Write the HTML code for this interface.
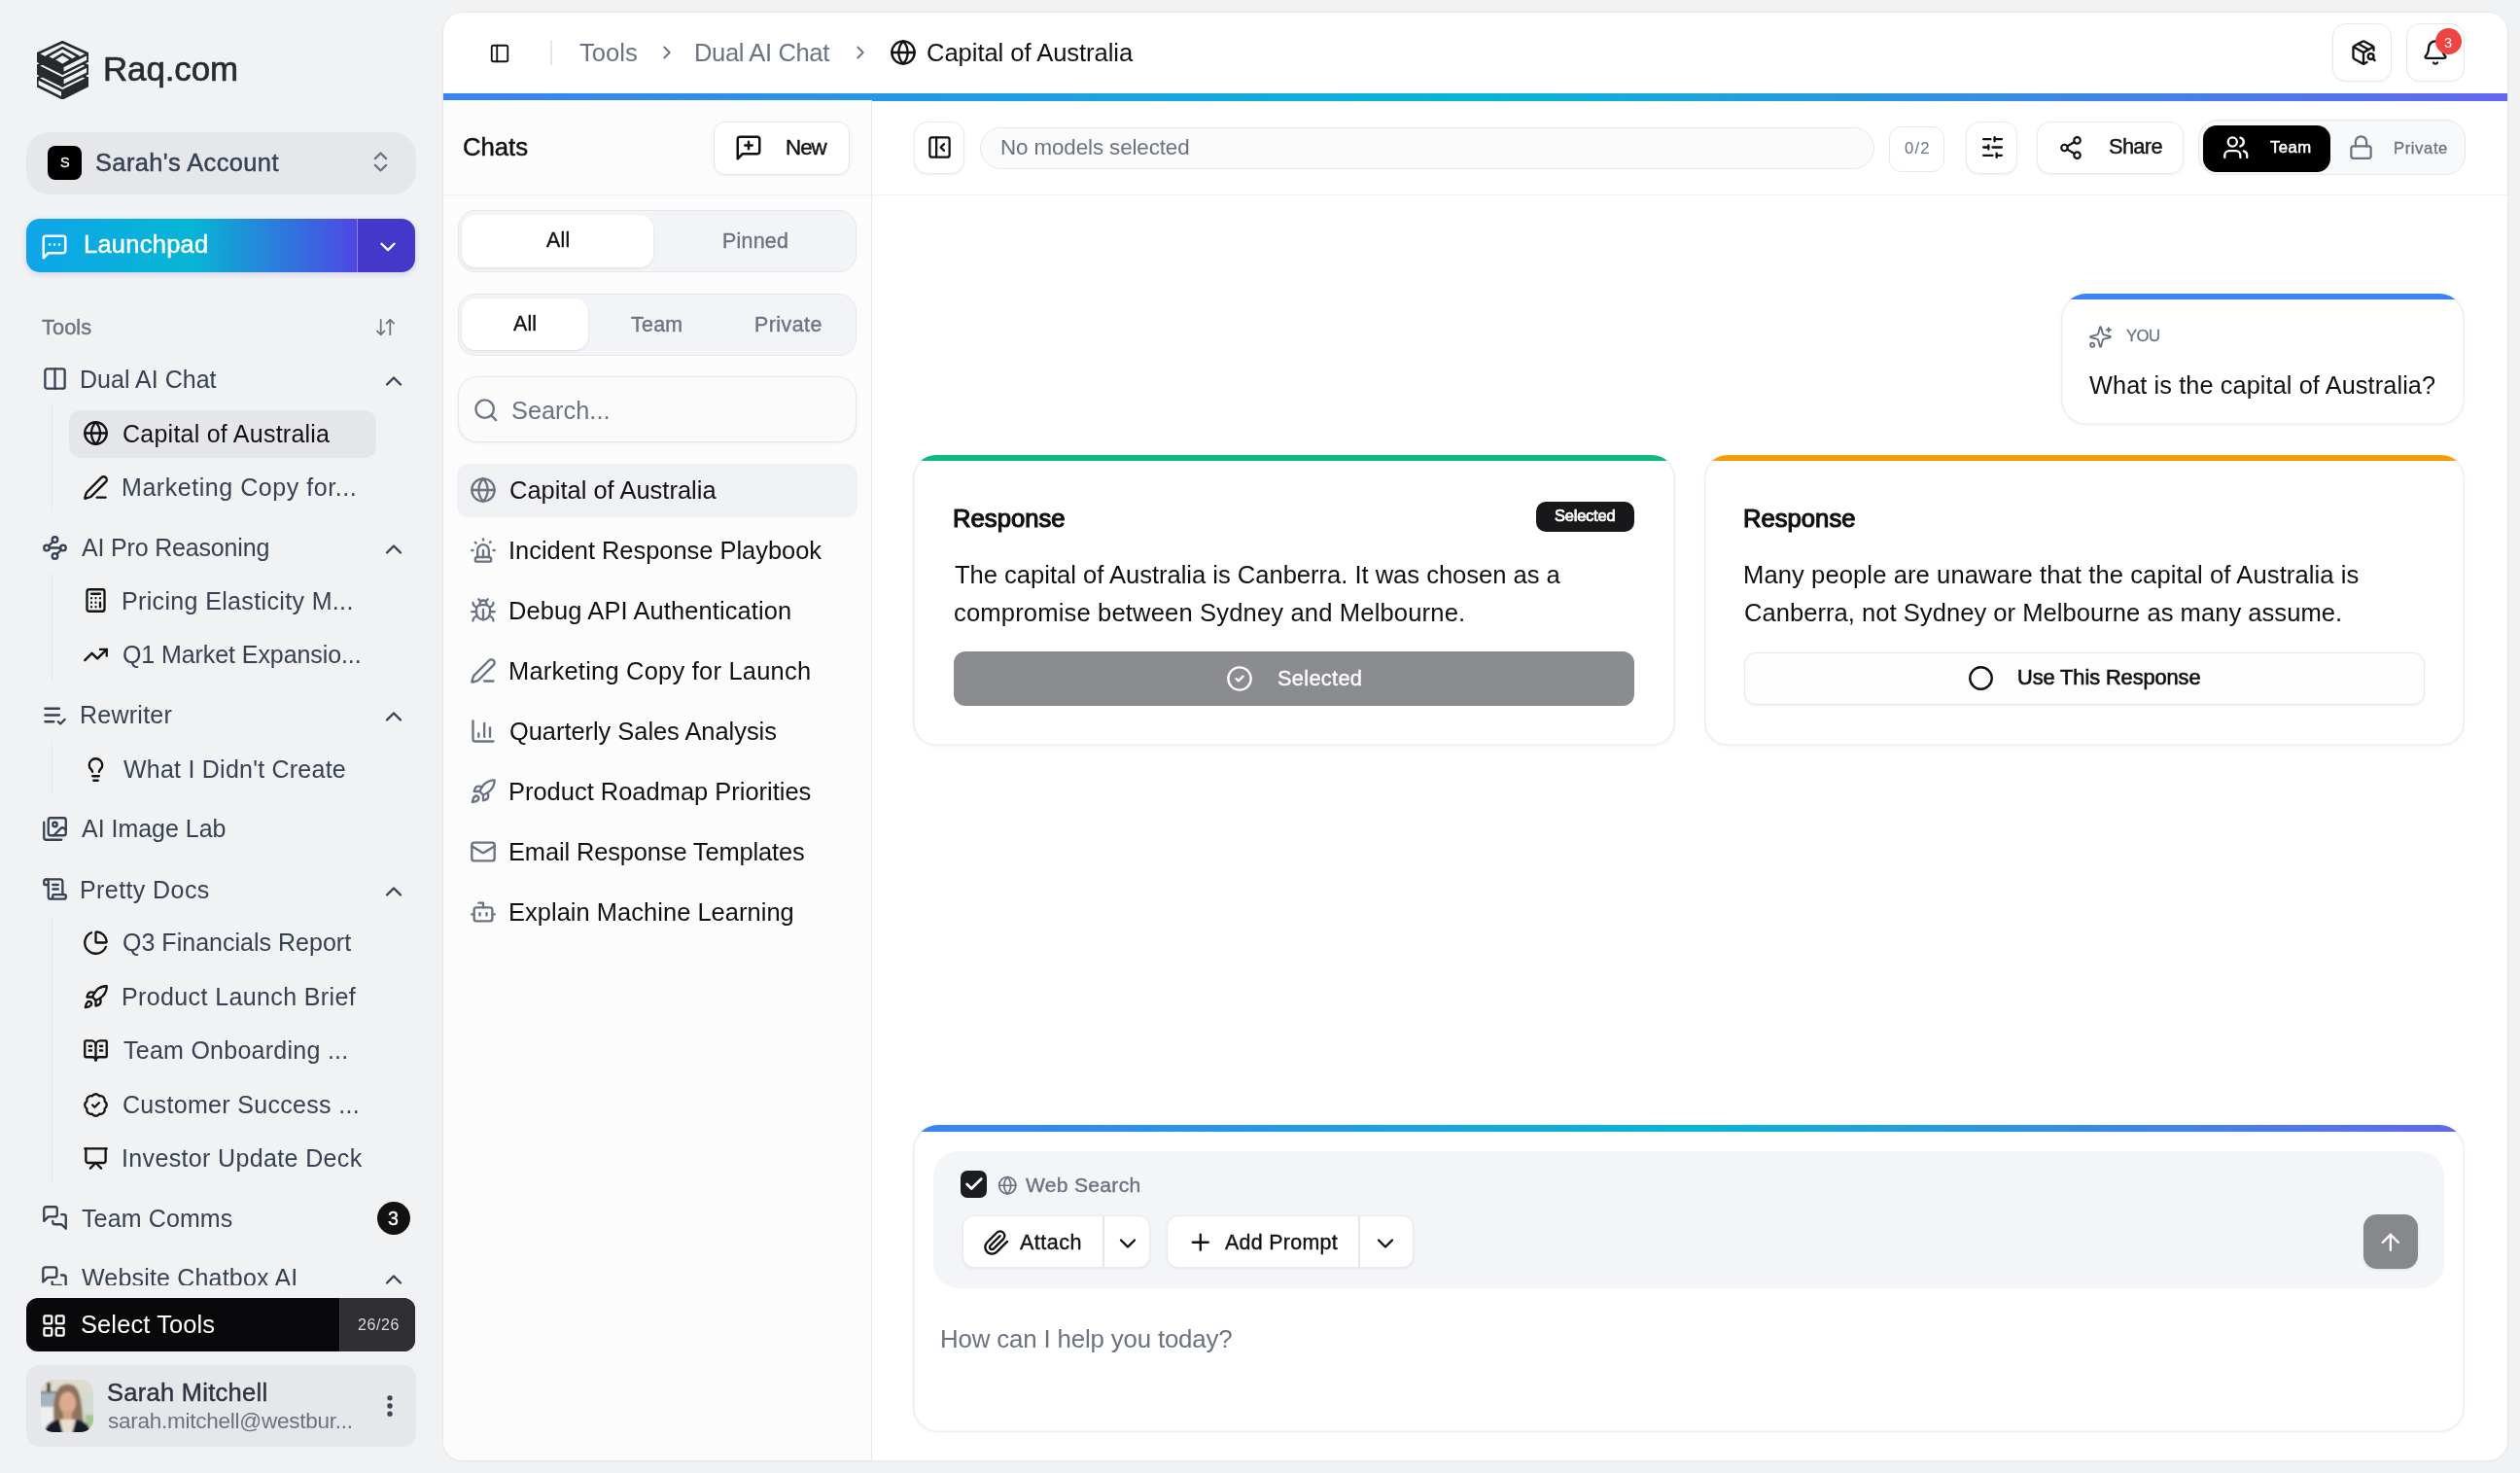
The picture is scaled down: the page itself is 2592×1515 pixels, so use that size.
<!DOCTYPE html><html><head><meta charset="utf-8"><style>html,body{margin:0;padding:0;width:2592px;height:1515px;overflow:hidden;background:#f1f2f4;font-family:"Liberation Sans", sans-serif;}</style></head><body><div style="position:relative;width:2592px;height:1515px;overflow:hidden"><svg style="position:absolute;left:38px;top:42px" width="53" height="60" viewBox="0 0 53 60" fill="none" stroke="#262b2f" stroke-width="2.6" stroke-linejoin="round">
<g>
<path d="M26.3 25.6 L52.4 38.6 L26.3 51.6 L0.3 38.6 Z" fill="#f1f2f4"/>
<path d="M0.3 38.6 L26.3 51.6 L26.3 59.2 L0.3 46.2 Z" fill="#f1f2f4"/>
<path d="M52.4 38.6 L26.3 51.6 L26.3 59.2 L52.4 46.2 Z" fill="#262b2f"/>
</g>
<g>
<path d="M26.3 12.8 L52.4 25.8 L26.3 38.8 L0.3 25.8 Z" fill="#f1f2f4"/>
<path d="M0.3 25.8 L26.3 38.8 L26.3 46.4 L0.3 33.4 Z" fill="#262b2f"/>
<path d="M52.4 25.8 L26.3 38.8 L26.3 46.4 L52.4 33.4 Z" fill="#f1f2f4"/>
</g>
<g>
<path d="M26.3 1.3 L52.4 13.3 L26.3 26.3 L0.3 13.3 Z" fill="#f1f2f4"/>
<path d="M26.3 7.2 L42.6 16.2 L26.3 25.6 L10.0 16.2 Z"/><path d="M26.3 13.6 L35.8 19.3 L26.3 25.2 L16.8 19.3 Z"/>
<path d="M0.3 13.3 L26.3 26.3 L26.3 33.6 L0.3 20.6 Z" fill="#262b2f"/>
<path d="M52.4 13.3 L26.3 26.3 L26.3 33.6 L52.4 20.6 Z" fill="#f1f2f4"/>
</g>
</svg>
<div style="position:absolute;left:106.00px;top:53.97px;font-size:34.88px;line-height:34.88px;font-weight:400;color:#262b2f;letter-spacing:-0.083px;white-space:nowrap;will-change:transform;-webkit-text-stroke:0.63px #262b2f;">Raq.com</div>
<div style="position:absolute;left:27px;top:136px;width:401px;height:64px;background:#e6e7eb;border-radius:24px;"></div>
<div style="position:absolute;left:49px;top:150px;width:35px;height:35px;background:#000;border-radius:8px;"></div>
<div style="position:absolute;left:62.20px;top:159.90px;font-size:14.53px;line-height:14.53px;font-weight:400;color:#fff;letter-spacing:0.000px;white-space:nowrap;will-change:transform;-webkit-text-stroke:0.26px #fff;">S</div>
<div style="position:absolute;left:97.70px;top:155.27px;font-size:25.44px;line-height:25.44px;font-weight:400;color:#374151;letter-spacing:0.388px;white-space:nowrap;will-change:transform;-webkit-text-stroke:0.46px #374151;">Sarah's Account</div>
<svg style="position:absolute;left:378.20px;top:153.10px;" width="27" height="27" viewBox="0 0 24 24" fill="none" stroke="#6b7280" stroke-width="2" stroke-linecap="round" stroke-linejoin="round"><path d="m7 15 5 5 5-5"/><path d="m7 9 5-5 5 5"/></svg>
<div style="position:absolute;left:27px;top:225px;width:400px;height:55px;border-radius:14px;overflow:hidden;box-shadow:0 2px 6px rgba(79,70,229,0.18);"><div style="position:absolute;left:0;top:0;width:341px;height:55px;background:linear-gradient(90deg,#0ea5e9 0%,#06b6d4 50%,#4f46e5 100%);"></div><div style="position:absolute;left:341px;top:0;width:59px;height:55px;background:#4338ca;"></div><div style="position:absolute;left:340px;top:0;width:1px;height:55px;background:rgba(255,255,255,0.35);"></div></div>
<svg style="position:absolute;left:40.60px;top:239.10px;" width="30" height="30" viewBox="0 0 24 24" fill="none" stroke="#fff" stroke-width="2" stroke-linecap="round" stroke-linejoin="round"><path d="M21 15a2 2 0 0 1-2 2H7l-4 4V5a2 2 0 0 1 2-2h14a2 2 0 0 1 2 2z"/><path d="M8 10h.01"/><path d="M12 10h.01"/><path d="M16 10h.01"/></svg>
<div style="position:absolute;left:85.50px;top:239.27px;font-size:25.44px;line-height:25.44px;font-weight:400;color:#fff;letter-spacing:0.281px;white-space:nowrap;will-change:transform;-webkit-text-stroke:0.46px #fff;">Launchpad</div>
<svg style="position:absolute;left:385.80px;top:240.60px;" width="26" height="26" viewBox="0 0 24 24" fill="none" stroke="#fff" stroke-width="2.2" stroke-linecap="round" stroke-linejoin="round"><path d="m6 9 6 6 6-6"/></svg>
<div style="position:absolute;left:42.80px;top:325.55px;font-size:21.8px;line-height:21.8px;font-weight:400;color:#6b7280;letter-spacing:0.054px;white-space:nowrap;will-change:transform;-webkit-text-stroke:0.39px #6b7280;">Tools</div>
<svg style="position:absolute;left:385.20px;top:324.70px;" width="23" height="23" viewBox="0 0 24 24" fill="none" stroke="#6b7280" stroke-width="1.8" stroke-linecap="round" stroke-linejoin="round"><path d="m3 16 4 4 4-4"/><path d="M7 20V4"/><path d="m21 8-4-4-4 4"/><path d="M17 4v16"/></svg>
<svg style="position:absolute;left:42.90px;top:376.20px;" width="27" height="27" viewBox="0 0 24 24" fill="none" stroke="#374151" stroke-width="2.05" stroke-linecap="round" stroke-linejoin="round"><rect width="18" height="18" x="3" y="3" rx="2"/><path d="M12 3v18"/></svg>
<div style="position:absolute;left:82.30px;top:377.54px;font-size:25.0px;line-height:25.0px;font-weight:400;color:#374151;letter-spacing:0.019px;white-space:nowrap;will-change:transform;">Dual AI Chat</div>
<svg style="position:absolute;left:391.00px;top:377.50px;" width="28" height="28" viewBox="0 0 24 24" fill="none" stroke="#374151" stroke-width="2" stroke-linecap="round" stroke-linejoin="round"><path d="m18 15-6-6-6 6"/></svg>
<div style="position:absolute;left:52.8px;top:416px;width:1.3px;height:110px;background:#e3e5e9;"></div>
<div style="position:absolute;left:71px;top:422px;width:316px;height:49px;background:#e5e6ea;border-radius:12px;"></div>
<svg style="position:absolute;left:84.70px;top:432.30px;" width="27" height="27" viewBox="0 0 24 24" fill="none" stroke="#111" stroke-width="2.05" stroke-linecap="round" stroke-linejoin="round"><circle cx="12" cy="12" r="10"/><path d="M12 2a14.5 14.5 0 0 0 0 20 14.5 14.5 0 0 0 0-20"/><path d="M2 12h20"/></svg>
<div style="position:absolute;left:126.30px;top:434.44px;font-size:25.0px;line-height:25.0px;font-weight:400;color:#111;letter-spacing:0.241px;white-space:nowrap;will-change:transform;">Capital of Australia</div>
<svg style="position:absolute;left:84.70px;top:487.80px;" width="27" height="27" viewBox="0 0 24 24" fill="none" stroke="#111" stroke-width="2.05" stroke-linecap="round" stroke-linejoin="round"><path d="M13 21h8"/><path d="M21.174 6.812a1 1 0 0 0-3.986-3.987L3.842 16.174a2 2 0 0 0-.5.83l-1.321 4.352a.5.5 0 0 0 .623.622l4.353-1.32a2 2 0 0 0 .83-.497z"/></svg>
<div style="position:absolute;left:125.30px;top:488.94px;font-size:25.0px;line-height:25.0px;font-weight:400;color:#374151;letter-spacing:0.550px;white-space:nowrap;will-change:transform;">Marketing Copy for...</div>
<svg style="position:absolute;left:42.90px;top:549.50px;" width="27" height="27" viewBox="0 0 24 24" fill="none" stroke="#374151" stroke-width="2.05" stroke-linecap="round" stroke-linejoin="round"><circle cx="12" cy="4.5" r="2.5"/><path d="m10.2 6.3-3.9 3.9"/><circle cx="4.5" cy="12" r="2.5"/><path d="M7 12h10"/><circle cx="19.5" cy="12" r="2.5"/><path d="m13.8 17.7 3.9-3.9"/><circle cx="12" cy="19.5" r="2.5"/></svg>
<div style="position:absolute;left:84.30px;top:550.84px;font-size:25.0px;line-height:25.0px;font-weight:400;color:#374151;letter-spacing:-0.176px;white-space:nowrap;will-change:transform;">AI Pro Reasoning</div>
<svg style="position:absolute;left:391.00px;top:550.80px;" width="28" height="28" viewBox="0 0 24 24" fill="none" stroke="#374151" stroke-width="2" stroke-linecap="round" stroke-linejoin="round"><path d="m18 15-6-6-6 6"/></svg>
<div style="position:absolute;left:52.8px;top:589px;width:1.3px;height:111px;background:#e3e5e9;"></div>
<svg style="position:absolute;left:84.70px;top:604.30px;" width="27" height="27" viewBox="0 0 24 24" fill="none" stroke="#111" stroke-width="2.05" stroke-linecap="round" stroke-linejoin="round"><rect width="16" height="20" x="4" y="2" rx="2"/><line x1="8" x2="16" y1="6" y2="6"/><line x1="16" x2="16" y1="14" y2="18"/><path d="M16 10h.01"/><path d="M12 10h.01"/><path d="M8 10h.01"/><path d="M12 14h.01"/><path d="M8 14h.01"/><path d="M12 18h.01"/><path d="M8 18h.01"/></svg>
<div style="position:absolute;left:125.30px;top:606.44px;font-size:25.0px;line-height:25.0px;font-weight:400;color:#374151;letter-spacing:0.352px;white-space:nowrap;will-change:transform;">Pricing Elasticity M...</div>
<svg style="position:absolute;left:84.70px;top:659.90px;" width="27" height="27" viewBox="0 0 24 24" fill="none" stroke="#111" stroke-width="2.05" stroke-linecap="round" stroke-linejoin="round"><polyline points="22 7 13.5 15.5 8.5 10.5 2 17"/><polyline points="16 7 22 7 22 13"/></svg>
<div style="position:absolute;left:126.30px;top:661.04px;font-size:25.0px;line-height:25.0px;font-weight:400;color:#374151;letter-spacing:-0.084px;white-space:nowrap;will-change:transform;">Q1 Market Expansio...</div>
<svg style="position:absolute;left:42.90px;top:721.70px;" width="27" height="27" viewBox="0 0 24 24" fill="none" stroke="#374151" stroke-width="2.05" stroke-linecap="round" stroke-linejoin="round"><path d="M11 18H3"/><path d="m15 18 2 2 4-4"/><path d="M16 12H3"/><path d="M16 6H3"/></svg>
<div style="position:absolute;left:82.30px;top:723.04px;font-size:25.0px;line-height:25.0px;font-weight:400;color:#374151;letter-spacing:0.251px;white-space:nowrap;will-change:transform;">Rewriter</div>
<svg style="position:absolute;left:391.00px;top:723.00px;" width="28" height="28" viewBox="0 0 24 24" fill="none" stroke="#374151" stroke-width="2" stroke-linecap="round" stroke-linejoin="round"><path d="m18 15-6-6-6 6"/></svg>
<div style="position:absolute;left:52.8px;top:762px;width:1.3px;height:54px;background:#e3e5e9;"></div>
<svg style="position:absolute;left:84.70px;top:777.60px;" width="27" height="27" viewBox="0 0 24 24" fill="none" stroke="#111" stroke-width="2.05" stroke-linecap="round" stroke-linejoin="round"><path d="M15 14c.2-1 .7-1.7 1.5-2.5 1-.9 1.5-2.2 1.5-3.5A6 6 0 0 0 6 8c0 1 .2 2.2 1.5 3.5.7.7 1.3 1.5 1.5 2.5"/><path d="M9 18h6"/><path d="M10 22h4"/></svg>
<div style="position:absolute;left:127.30px;top:778.74px;font-size:25.0px;line-height:25.0px;font-weight:400;color:#374151;letter-spacing:0.232px;white-space:nowrap;will-change:transform;">What I Didn't Create</div>
<svg style="position:absolute;left:42.90px;top:838.80px;" width="27" height="27" viewBox="0 0 24 24" fill="none" stroke="#374151" stroke-width="2.05" stroke-linecap="round" stroke-linejoin="round"><path d="M18 22H4a2 2 0 0 1-2-2V6"/><path d="m22 13-1.296-1.296a2.41 2.41 0 0 0-3.408 0L11 18"/><circle cx="12" cy="8" r="2"/><rect width="16" height="16" x="6" y="2" rx="2"/></svg>
<div style="position:absolute;left:84.30px;top:840.14px;font-size:25.0px;line-height:25.0px;font-weight:400;color:#374151;letter-spacing:-0.027px;white-space:nowrap;will-change:transform;">AI Image Lab</div>
<svg style="position:absolute;left:42.90px;top:901.30px;" width="27" height="27" viewBox="0 0 24 24" fill="none" stroke="#374151" stroke-width="2.05" stroke-linecap="round" stroke-linejoin="round"><path d="M15 12h-5"/><path d="M15 8h-5"/><path d="M19 17V5a2 2 0 0 0-2-2H4"/><path d="M8 21h12a2 2 0 0 0 2-2v-1a1 1 0 0 0-1-1H11a1 1 0 0 0-1 1v1a2 2 0 1 1-4 0V5a2 2 0 1 0-4 0v2a1 1 0 0 0 1 1h3"/></svg>
<div style="position:absolute;left:82.30px;top:902.64px;font-size:25.0px;line-height:25.0px;font-weight:400;color:#374151;letter-spacing:0.410px;white-space:nowrap;will-change:transform;">Pretty Docs</div>
<svg style="position:absolute;left:391.00px;top:902.60px;" width="28" height="28" viewBox="0 0 24 24" fill="none" stroke="#374151" stroke-width="2" stroke-linecap="round" stroke-linejoin="round"><path d="m18 15-6-6-6 6"/></svg>
<div style="position:absolute;left:52.8px;top:942px;width:1.3px;height:273.5px;background:#e3e5e9;"></div>
<svg style="position:absolute;left:84.70px;top:955.90px;" width="27" height="27" viewBox="0 0 24 24" fill="none" stroke="#111" stroke-width="2.05" stroke-linecap="round" stroke-linejoin="round"><path d="M21 12c.552 0 1.005-.449.95-.998a10 10 0 0 0-8.953-8.951c-.55-.055-.998.398-.998.95v8a1 1 0 0 0 1 1z"/><path d="M21.21 15.89A10 10 0 1 1 8 2.83"/></svg>
<div style="position:absolute;left:126.30px;top:957.04px;font-size:25.0px;line-height:25.0px;font-weight:400;color:#374151;letter-spacing:0.017px;white-space:nowrap;will-change:transform;">Q3 Financials Report</div>
<svg style="position:absolute;left:84.70px;top:1011.50px;" width="27" height="27" viewBox="0 0 24 24" fill="none" stroke="#111" stroke-width="2.05" stroke-linecap="round" stroke-linejoin="round"><path d="M4.5 16.5c-1.5 1.26-2 5-2 5s3.74-.5 5-2c.71-.84.7-2.13-.09-2.91a2.18 2.18 0 0 0-2.91-.09z"/><path d="m12 15-3-3a22 22 0 0 1 2-3.95A12.88 12.88 0 0 1 22 2c0 2.72-.78 7.5-6 11a22.35 22.35 0 0 1-4 2z"/><path d="M9 12H4s.55-3.03 2-4c1.62-1.08 5 0 5 0"/><path d="M12 15v5s3.03-.55 4-2c1.08-1.62 0-5 0-5"/></svg>
<div style="position:absolute;left:125.30px;top:1012.64px;font-size:25.0px;line-height:25.0px;font-weight:400;color:#374151;letter-spacing:0.378px;white-space:nowrap;will-change:transform;">Product Launch Brief</div>
<svg style="position:absolute;left:84.70px;top:1066.90px;" width="27" height="27" viewBox="0 0 24 24" fill="none" stroke="#111" stroke-width="2.05" stroke-linecap="round" stroke-linejoin="round"><path d="M12 7v14"/><path d="M16 12h2"/><path d="M16 8h2"/><path d="M3 18a1 1 0 0 1-1-1V4a1 1 0 0 1 1-1h5a4 4 0 0 1 4 4 4 4 0 0 1 4-4h5a1 1 0 0 1 1 1v13a1 1 0 0 1-1 1h-6a3 3 0 0 0-3 3 3 3 0 0 0-3-3z"/><path d="M6 12h2"/><path d="M6 8h2"/></svg>
<div style="position:absolute;left:127.30px;top:1068.04px;font-size:25.0px;line-height:25.0px;font-weight:400;color:#374151;letter-spacing:0.263px;white-space:nowrap;will-change:transform;">Team Onboarding ...</div>
<svg style="position:absolute;left:84.70px;top:1122.50px;" width="27" height="27" viewBox="0 0 24 24" fill="none" stroke="#111" stroke-width="2.05" stroke-linecap="round" stroke-linejoin="round"><path d="M3.85 8.62a4 4 0 0 1 4.78-4.77 4 4 0 0 1 6.74 0 4 4 0 0 1 4.78 4.78 4 4 0 0 1 0 6.74 4 4 0 0 1-4.77 4.78 4 4 0 0 1-6.75 0 4 4 0 0 1-4.78-4.77 4 4 0 0 1 0-6.76Z"/><path d="m9 12 2 2 4-4"/></svg>
<div style="position:absolute;left:126.30px;top:1123.64px;font-size:25.0px;line-height:25.0px;font-weight:400;color:#374151;letter-spacing:0.320px;white-space:nowrap;will-change:transform;">Customer Success ...</div>
<svg style="position:absolute;left:84.70px;top:1178.00px;" width="27" height="27" viewBox="0 0 24 24" fill="none" stroke="#111" stroke-width="2.05" stroke-linecap="round" stroke-linejoin="round"><path d="M2 3h20"/><path d="M21 3v11a2 2 0 0 1-2 2H5a2 2 0 0 1-2-2V3"/><path d="m7 21 5-5 5 5"/></svg>
<div style="position:absolute;left:125.30px;top:1179.14px;font-size:25.0px;line-height:25.0px;font-weight:400;color:#374151;letter-spacing:0.358px;white-space:nowrap;will-change:transform;">Investor Update Deck</div>
<svg style="position:absolute;left:42.90px;top:1239.20px;" width="27" height="27" viewBox="0 0 24 24" fill="none" stroke="#374151" stroke-width="2.05" stroke-linecap="round" stroke-linejoin="round"><path d="M14 9a2 2 0 0 1-2 2H6l-4 4V4a2 2 0 0 1 2-2h8a2 2 0 0 1 2 2z"/><path d="M18 9h2a2 2 0 0 1 2 2v11l-4-4h-6a2 2 0 0 1-2-2v-1"/></svg>
<div style="position:absolute;left:84.30px;top:1240.54px;font-size:25.0px;line-height:25.0px;font-weight:400;color:#374151;letter-spacing:0.124px;white-space:nowrap;will-change:transform;">Team Comms</div>
<div style="position:absolute;left:387.5px;top:1236.3px;width:34px;height:34px;background:#111;border-radius:50%;"></div>
<div style="position:absolute;left:398.50px;top:1243.89px;font-size:19.62px;line-height:19.62px;font-weight:400;color:#fff;letter-spacing:0.000px;white-space:nowrap;will-change:transform;-webkit-text-stroke:0.35px #fff;">3</div>
<div style="position:absolute;left:0;top:1280px;width:440px;height:42px;overflow:hidden">
<svg style="position:absolute;left:42.40px;top:21.00px;" width="28" height="28" viewBox="0 0 24 24" fill="none" stroke="#374151" stroke-width="2" stroke-linecap="round" stroke-linejoin="round"><path d="M14 9a2 2 0 0 1-2 2H6l-4 4V4a2 2 0 0 1 2-2h8a2 2 0 0 1 2 2z"/><path d="M18 9h2a2 2 0 0 1 2 2v11l-4-4h-6a2 2 0 0 1-2-2v-1"/></svg>
<div style="position:absolute;left:84.30px;top:22.34px;font-size:25.0px;line-height:25.0px;font-weight:400;color:#374151;letter-spacing:0.186px;white-space:nowrap;will-change:transform;">Website Chatbox AI</div>
<svg style="position:absolute;left:391.00px;top:22.30px;" width="28" height="28" viewBox="0 0 24 24" fill="none" stroke="#374151" stroke-width="2" stroke-linecap="round" stroke-linejoin="round"><path d="m18 15-6-6-6 6"/></svg>
</div>
<div style="position:absolute;left:27px;top:1335px;width:400px;height:55px;border-radius:12px;overflow:hidden;background:#09090b"><div style="position:absolute;left:322px;top:0;width:78px;height:55px;background:#2f2f33;border-left:1px solid #3d3d42"></div></div>
<svg style="position:absolute;left:42.00px;top:1350.30px;" width="27" height="27" viewBox="0 0 24 24" fill="none" stroke="#fff" stroke-width="2" stroke-linecap="round" stroke-linejoin="round"><rect width="7" height="7" x="3" y="3" rx="1"/><rect width="7" height="7" x="14" y="3" rx="1"/><rect width="7" height="7" x="14" y="14" rx="1"/><rect width="7" height="7" x="3" y="14" rx="1"/></svg>
<div style="position:absolute;left:83.20px;top:1349.67px;font-size:25.44px;line-height:25.44px;font-weight:400;color:#fff;letter-spacing:0.125px;white-space:nowrap;will-change:transform;">Select Tools</div>
<div style="position:absolute;left:367.50px;top:1354.76px;font-size:15.99px;line-height:15.99px;font-weight:400;color:#d9dade;letter-spacing:0.597px;white-space:nowrap;will-change:transform;">26/26</div>
<div style="position:absolute;left:27px;top:1404px;width:401px;height:84px;background:#e6e7eb;border-radius:14px;"></div>
<svg style="position:absolute;left:42px;top:1419px" width="54" height="54" viewBox="0 0 54 54">
<defs><clipPath id="av"><rect width="54" height="54" rx="13"/></clipPath>
<filter id="blr"><feGaussianBlur stdDeviation="0.9"/></filter></defs>
<g clip-path="url(#av)"><g filter="url(#blr)">
<rect x="-2" y="-2" width="58" height="58" fill="#dedbcf"/>
<rect x="-2" y="13" width="18" height="15" fill="#a6b5bb"/>
<rect x="-2" y="28" width="18" height="28" fill="#eef0ee"/>
<rect x="38" y="13" width="18" height="43" fill="#d3dad2"/>
<rect x="46" y="36" width="10" height="12" fill="#a8c592"/>
<rect x="6" y="3" width="4" height="10" fill="#44443f"/>
<rect x="-2" y="12" width="20" height="2" fill="#74776f"/>
<path d="M14 46 C12 30 13 13 20 7 C24 3.5 31 3.5 35 7 C42 13 42 30 44 46 Z" fill="#8d735b"/>
<ellipse cx="27.5" cy="24" rx="8.6" ry="11.5" fill="#dcac8e"/>
<rect x="23" y="32" width="9" height="10" fill="#d2a084"/>
<path d="M19 41 L36 41 L33 56 L22 56 Z" fill="#e8decd"/>
<path d="M3 56 C5 46 11 42 19 41 L23 56 Z" fill="#141a28"/>
<path d="M52 56 C50 46 44 42 36 41 L32 56 Z" fill="#141a28"/>
</g></g></svg>
<div style="position:absolute;left:110.30px;top:1420.47px;font-size:25.44px;line-height:25.44px;font-weight:400;color:#2d3340;letter-spacing:0.299px;white-space:nowrap;will-change:transform;-webkit-text-stroke:0.46px #2d3340;">Sarah Mitchell</div>
<div style="position:absolute;left:111.30px;top:1450.63px;font-size:22.53px;line-height:22.53px;font-weight:400;color:#6b7280;letter-spacing:-0.257px;white-space:nowrap;will-change:transform;">sarah.mitchell@westbur...</div>
<svg style="position:absolute;left:386.80px;top:1432.30px;" width="28" height="28" viewBox="0 0 24 24" fill="none" stroke="#374151" stroke-width="2.6" stroke-linecap="round" stroke-linejoin="round"><circle cx="12" cy="12" r="1"/><circle cx="12" cy="5" r="1"/><circle cx="12" cy="19" r="1"/></svg>
<div style="position:absolute;left:456px;top:13px;width:2123px;height:1489px;background:#fff;border-radius:20px;box-shadow:0 0 0 1px #e6e8ec,0 1px 3px rgba(0,0,0,0.06);"></div>
<svg style="position:absolute;left:503.00px;top:43.50px;" width="22" height="22" viewBox="0 0 24 24" fill="none" stroke="#111" stroke-width="2" stroke-linecap="round" stroke-linejoin="round"><rect width="18" height="18" x="3" y="3" rx="2"/><path d="M9 3v18"/></svg>
<div style="position:absolute;left:566px;top:41px;width:1.5px;height:26px;background:#e5e7eb;"></div>
<div style="position:absolute;left:596.00px;top:42.35px;font-size:25.58px;line-height:25.58px;font-weight:400;color:#6b7280;letter-spacing:0.019px;white-space:nowrap;will-change:transform;">Tools</div>
<svg style="position:absolute;left:674.70px;top:43.30px;" width="22" height="22" viewBox="0 0 24 24" fill="none" stroke="#6b7280" stroke-width="2" stroke-linecap="round" stroke-linejoin="round"><path d="m9 18 6-6-6-6"/></svg>
<div style="position:absolute;left:714.40px;top:42.35px;font-size:25.58px;line-height:25.58px;font-weight:400;color:#6b7280;letter-spacing:-0.392px;white-space:nowrap;will-change:transform;">Dual AI Chat</div>
<svg style="position:absolute;left:874.00px;top:43.30px;" width="22" height="22" viewBox="0 0 24 24" fill="none" stroke="#6b7280" stroke-width="2" stroke-linecap="round" stroke-linejoin="round"><path d="m9 18 6-6-6-6"/></svg>
<svg style="position:absolute;left:914.70px;top:40.20px;" width="28" height="28" viewBox="0 0 24 24" fill="none" stroke="#111" stroke-width="2" stroke-linecap="round" stroke-linejoin="round"><circle cx="12" cy="12" r="10"/><path d="M12 2a14.5 14.5 0 0 0 0 20 14.5 14.5 0 0 0 0-20"/><path d="M2 12h20"/></svg>
<div style="position:absolute;left:952.60px;top:42.35px;font-size:25.58px;line-height:25.58px;font-weight:400;color:#111;letter-spacing:-0.055px;white-space:nowrap;will-change:transform;">Capital of Australia</div>
<div style="position:absolute;left:2399px;top:24px;width:61px;height:60px;background:#fff;border:1.5px solid #e5e7eb;border-radius:14px;box-sizing:border-box;box-shadow:0 1px 2px rgba(0,0,0,0.04)"></div>
<svg style="position:absolute;left:2416.80px;top:40.20px;" width="28" height="28" viewBox="0 0 24 24" fill="none" stroke="#111" stroke-width="2" stroke-linecap="round" stroke-linejoin="round"><path d="M21 10V8a2 2 0 0 0-1-1.73l-7-4a2 2 0 0 0-2 0l-7 4A2 2 0 0 0 3 8v8a2 2 0 0 0 1 1.73l7 4a2 2 0 0 0 2 0l2-1.14"/><path d="m7.5 4.27 9 5.15"/><polyline points="3.29 7 12 12 20.71 7"/><line x1="12" x2="12" y1="22" y2="12"/><circle cx="18.5" cy="15.5" r="2.5"/><path d="M20.27 17.27 22 19"/></svg>
<div style="position:absolute;left:2475px;top:24px;width:60px;height:60px;background:#fff;border:1.5px solid #e5e7eb;border-radius:14px;box-sizing:border-box;box-shadow:0 1px 2px rgba(0,0,0,0.04)"></div>
<svg style="position:absolute;left:2491.30px;top:40.20px;" width="28" height="28" viewBox="0 0 24 24" fill="none" stroke="#111" stroke-width="2" stroke-linecap="round" stroke-linejoin="round"><path d="M10.268 21a2 2 0 0 0 3.464 0"/><path d="M3.262 15.326A1 1 0 0 0 4 17h16a1 1 0 0 0 .74-1.673C19.41 13.956 18 12.499 18 8A6 6 0 0 0 6 8c0 4.499-1.411 5.956-2.738 7.326"/></svg>
<div style="position:absolute;left:2505px;top:28.5px;width:27px;height:27px;background:#ef4444;border-radius:50%;"></div>
<div style="position:absolute;left:2514.00px;top:37.30px;font-size:14.53px;line-height:14.53px;font-weight:400;color:#fff;letter-spacing:0.000px;white-space:nowrap;will-change:transform;">3</div>
<div style="position:absolute;left:456px;top:96px;width:2123px;height:7.5px;background:linear-gradient(90deg,#3b82f6 0%,#06b6d4 50%,#6366f1 100%);"></div>
<div style="position:absolute;left:456px;top:103px;width:440px;height:1399px;background:#fcfcfd;border-bottom-left-radius:20px;"></div>
<div style="position:absolute;left:895.6px;top:103px;width:1.3px;height:1399px;background:#e6e8ec;"></div>
<div style="position:absolute;left:456px;top:200px;width:440px;height:1px;background:#eef0f2;"></div>
<div style="position:absolute;left:475.80px;top:138.92px;font-size:25.73px;line-height:25.73px;font-weight:400;color:#111;letter-spacing:-0.031px;white-space:nowrap;will-change:transform;-webkit-text-stroke:0.46px #111;">Chats</div>
<div style="position:absolute;left:734px;top:124.5px;width:140px;height:55px;background:#fff;border:1.5px solid #e5e7eb;border-radius:12px;box-sizing:border-box;box-shadow:0 1px 3px rgba(0,0,0,0.06)"></div>
<svg style="position:absolute;left:754.50px;top:137.40px;" width="30" height="30" viewBox="0 0 24 24" fill="none" stroke="#111" stroke-width="2" stroke-linecap="round" stroke-linejoin="round"><path d="M21 15a2 2 0 0 1-2 2H7l-4 4V5a2 2 0 0 1 2-2h14a2 2 0 0 1 2 2z"/><path d="M12 7v6"/><path d="M9 10h6"/></svg>
<div style="position:absolute;left:808.00px;top:140.66px;font-size:22.38px;line-height:22.38px;font-weight:400;color:#111;letter-spacing:-1.001px;white-space:nowrap;will-change:transform;-webkit-text-stroke:0.40px #111;">New</div>
<div style="position:absolute;left:471px;top:216px;width:410px;height:64px;background:#f3f4f7;border:1.5px solid #e5e7eb;border-radius:18px;box-sizing:border-box;"></div>
<div style="position:absolute;left:475px;top:221px;width:197px;height:54px;background:#fff;border-radius:14px;box-shadow:0 1px 3px rgba(0,0,0,0.10);"></div>
<div style="position:absolute;left:562.30px;top:236.91px;font-size:21.37px;line-height:21.37px;font-weight:400;color:#111;letter-spacing:0.254px;white-space:nowrap;will-change:transform;-webkit-text-stroke:0.38px #111;">All</div>
<div style="position:absolute;left:742.80px;top:237.91px;font-size:21.37px;line-height:21.37px;font-weight:400;color:#6b7280;letter-spacing:0.274px;white-space:nowrap;will-change:transform;-webkit-text-stroke:0.38px #6b7280;">Pinned</div>
<div style="position:absolute;left:471px;top:302px;width:410px;height:64px;background:#f3f4f7;border:1.5px solid #e5e7eb;border-radius:18px;box-sizing:border-box;"></div>
<div style="position:absolute;left:475px;top:307px;width:130px;height:53px;background:#fff;border-radius:14px;box-shadow:0 1px 3px rgba(0,0,0,0.10);"></div>
<div style="position:absolute;left:528.40px;top:323.11px;font-size:21.37px;line-height:21.37px;font-weight:400;color:#111;letter-spacing:0.154px;white-space:nowrap;will-change:transform;-webkit-text-stroke:0.38px #111;">All</div>
<div style="position:absolute;left:649.40px;top:324.11px;font-size:21.37px;line-height:21.37px;font-weight:400;color:#6b7280;letter-spacing:0.288px;white-space:nowrap;will-change:transform;-webkit-text-stroke:0.38px #6b7280;">Team</div>
<div style="position:absolute;left:776.20px;top:324.11px;font-size:21.37px;line-height:21.37px;font-weight:400;color:#6b7280;letter-spacing:0.484px;white-space:nowrap;will-change:transform;-webkit-text-stroke:0.38px #6b7280;">Private</div>
<div style="position:absolute;left:471px;top:387px;width:410px;height:68px;background:#fbfbfc;border:1.5px solid #e5e7eb;border-radius:20px;box-sizing:border-box;box-shadow:0 1px 3px rgba(0,0,0,0.06)"></div>
<svg style="position:absolute;left:485.70px;top:407.80px;" width="27.6" height="27.6" viewBox="0 0 24 24" fill="none" stroke="#6b7280" stroke-width="2" stroke-linecap="round" stroke-linejoin="round"><circle cx="11" cy="11" r="8"/><path d="m21 21-4.3-4.3"/></svg>
<div style="position:absolute;left:526.10px;top:409.59px;font-size:25.29px;line-height:25.29px;font-weight:400;color:#6b7280;letter-spacing:0.044px;white-space:nowrap;will-change:transform;">Search...</div>
<div style="position:absolute;left:470px;top:477px;width:412px;height:55px;background:#f0f1f5;border-radius:12px;"></div>
<svg style="position:absolute;left:482.80px;top:490.20px;" width="28" height="28" viewBox="0 0 24 24" fill="none" stroke="#6b7280" stroke-width="2" stroke-linecap="round" stroke-linejoin="round"><circle cx="12" cy="12" r="10"/><path d="M12 2a14.5 14.5 0 0 0 0 20 14.5 14.5 0 0 0 0-20"/><path d="M2 12h20"/></svg>
<div style="position:absolute;left:524.40px;top:491.67px;font-size:25.44px;line-height:25.44px;font-weight:400;color:#111;letter-spacing:0.024px;white-space:nowrap;will-change:transform;">Capital of Australia</div>
<svg style="position:absolute;left:482.80px;top:552.20px;" width="28" height="28" viewBox="0 0 24 24" fill="none" stroke="#6b7280" stroke-width="2" stroke-linecap="round" stroke-linejoin="round"><path d="M7 18v-6a5 5 0 1 1 10 0v6"/><path d="M5 21a1 1 0 0 0 1 1h12a1 1 0 0 0 1-1v-1a2 2 0 0 0-2-2H7a2 2 0 0 0-2 2z"/><path d="M21 12h1"/><path d="M18.5 4.5 18 5"/><path d="M2 12h1"/><path d="M12 2v1"/><path d="m4.929 4.929.707.707"/><path d="M12 12v6"/></svg>
<div style="position:absolute;left:523.40px;top:553.67px;font-size:25.44px;line-height:25.44px;font-weight:400;color:#111;letter-spacing:-0.016px;white-space:nowrap;will-change:transform;">Incident Response Playbook</div>
<svg style="position:absolute;left:482.80px;top:614.20px;" width="28" height="28" viewBox="0 0 24 24" fill="none" stroke="#6b7280" stroke-width="2" stroke-linecap="round" stroke-linejoin="round"><path d="m8 2 1.88 1.88"/><path d="M14.12 3.88 16 2"/><path d="M9 7.13v-1a3.003 3.003 0 1 1 6 0v1"/><path d="M12 20c-3.3 0-6-2.7-6-6v-3a4 4 0 0 1 4-4h4a4 4 0 0 1 4 4v3c0 3.3-2.7 6-6 6"/><path d="M12 20v-9"/><path d="M6.53 9C4.6 8.8 3 7.1 3 5"/><path d="M6 13H2"/><path d="M3 21c0-2.1 1.7-3.9 3.8-4"/><path d="M20.97 5c0 2.1-1.6 3.8-3.5 4"/><path d="M22 13h-4"/><path d="M17.2 17c2.1.1 3.8 1.9 3.8 4"/></svg>
<div style="position:absolute;left:523.40px;top:615.67px;font-size:25.44px;line-height:25.44px;font-weight:400;color:#111;letter-spacing:0.114px;white-space:nowrap;will-change:transform;">Debug API Authentication</div>
<svg style="position:absolute;left:482.80px;top:676.20px;" width="28" height="28" viewBox="0 0 24 24" fill="none" stroke="#6b7280" stroke-width="2" stroke-linecap="round" stroke-linejoin="round"><path d="M13 21h8"/><path d="M21.174 6.812a1 1 0 0 0-3.986-3.987L3.842 16.174a2 2 0 0 0-.5.83l-1.321 4.352a.5.5 0 0 0 .623.622l4.353-1.32a2 2 0 0 0 .83-.497z"/></svg>
<div style="position:absolute;left:523.40px;top:677.67px;font-size:25.44px;line-height:25.44px;font-weight:400;color:#111;letter-spacing:0.235px;white-space:nowrap;will-change:transform;">Marketing Copy for Launch</div>
<svg style="position:absolute;left:482.80px;top:738.20px;" width="28" height="28" viewBox="0 0 24 24" fill="none" stroke="#6b7280" stroke-width="2" stroke-linecap="round" stroke-linejoin="round"><path d="M3 3v16a2 2 0 0 0 2 2h16"/><path d="M18 17V9"/><path d="M13 17V5"/><path d="M8 17v-3"/></svg>
<div style="position:absolute;left:524.40px;top:739.67px;font-size:25.44px;line-height:25.44px;font-weight:400;color:#111;letter-spacing:-0.034px;white-space:nowrap;will-change:transform;">Quarterly Sales Analysis</div>
<svg style="position:absolute;left:482.80px;top:800.20px;" width="28" height="28" viewBox="0 0 24 24" fill="none" stroke="#6b7280" stroke-width="2" stroke-linecap="round" stroke-linejoin="round"><path d="M4.5 16.5c-1.5 1.26-2 5-2 5s3.74-.5 5-2c.71-.84.7-2.13-.09-2.91a2.18 2.18 0 0 0-2.91-.09z"/><path d="m12 15-3-3a22 22 0 0 1 2-3.95A12.88 12.88 0 0 1 22 2c0 2.72-.78 7.5-6 11a22.35 22.35 0 0 1-4 2z"/><path d="M9 12H4s.55-3.03 2-4c1.62-1.08 5 0 5 0"/><path d="M12 15v5s3.03-.55 4-2c1.08-1.62 0-5 0-5"/></svg>
<div style="position:absolute;left:523.40px;top:801.67px;font-size:25.44px;line-height:25.44px;font-weight:400;color:#111;letter-spacing:0.011px;white-space:nowrap;will-change:transform;">Product Roadmap Priorities</div>
<svg style="position:absolute;left:482.80px;top:862.20px;" width="28" height="28" viewBox="0 0 24 24" fill="none" stroke="#6b7280" stroke-width="2" stroke-linecap="round" stroke-linejoin="round"><rect width="20" height="16" x="2" y="4" rx="2"/><path d="m22 7-8.97 5.7a1.94 1.94 0 0 1-2.06 0L2 7"/></svg>
<div style="position:absolute;left:523.40px;top:863.67px;font-size:25.44px;line-height:25.44px;font-weight:400;color:#111;letter-spacing:-0.130px;white-space:nowrap;will-change:transform;">Email Response Templates</div>
<svg style="position:absolute;left:482.80px;top:924.20px;" width="28" height="28" viewBox="0 0 24 24" fill="none" stroke="#6b7280" stroke-width="2" stroke-linecap="round" stroke-linejoin="round"><path d="M12 8V4H8"/><rect width="16" height="12" x="4" y="8" rx="2"/><path d="M2 14h2"/><path d="M20 14h2"/><path d="M15 13v2"/><path d="M9 13v2"/></svg>
<div style="position:absolute;left:523.40px;top:925.67px;font-size:25.44px;line-height:25.44px;font-weight:400;color:#111;letter-spacing:0.045px;white-space:nowrap;will-change:transform;">Explain Machine Learning</div>
<div style="position:absolute;left:897px;top:200px;width:1682px;height:1px;background:#eef0f2;"></div>
<div style="position:absolute;left:940px;top:125px;width:52px;height:54px;background:#fff;border:1.5px solid #e8eaee;border-radius:14px;box-sizing:border-box;box-shadow:0 1px 3px rgba(0,0,0,0.07);"></div>
<svg style="position:absolute;left:952.70px;top:138.20px;" width="27" height="27" viewBox="0 0 24 24" fill="none" stroke="#111" stroke-width="2" stroke-linecap="round" stroke-linejoin="round"><rect width="18" height="18" x="3" y="3" rx="2"/><path d="M9 3v18"/><path d="m16 15-3-3 3-3"/></svg>
<div style="position:absolute;left:1008px;top:131px;width:920px;height:43px;background:#fbfbfc;border:1.5px solid #e5e7eb;border-radius:22px;box-sizing:border-box;"></div>
<div style="position:absolute;left:1029.30px;top:141.26px;font-size:22.38px;line-height:22.38px;font-weight:400;color:#6b7280;letter-spacing:-0.109px;white-space:nowrap;will-change:transform;">No models selected</div>
<div style="position:absolute;left:1943px;top:130px;width:57px;height:47px;background:#fff;border:1.5px solid #e5e7eb;border-radius:12px;box-sizing:border-box;"></div>
<div style="position:absolute;left:1959.00px;top:144.75px;font-size:16.72px;line-height:16.72px;font-weight:400;color:#6b7280;letter-spacing:1.185px;white-space:nowrap;will-change:transform;">0/2</div>
<div style="position:absolute;left:2022px;top:125px;width:53px;height:54px;background:#fff;border:1.5px solid #e8eaee;border-radius:14px;box-sizing:border-box;box-shadow:0 1px 3px rgba(0,0,0,0.07);"></div>
<svg style="position:absolute;left:2037.00px;top:139.30px;" width="25" height="25" viewBox="0 0 24 24" fill="none" stroke="#111" stroke-width="2.2" stroke-linecap="round" stroke-linejoin="round"><line x1="21" x2="14" y1="4" y2="4"/><line x1="10" x2="3" y1="4" y2="4"/><line x1="21" x2="12" y1="12" y2="12"/><line x1="8" x2="3" y1="12" y2="12"/><line x1="21" x2="16" y1="20" y2="20"/><line x1="12" x2="3" y1="20" y2="20"/><line x1="14" x2="14" y1="2" y2="6"/><line x1="8" x2="8" y1="10" y2="14"/><line x1="16" x2="16" y1="18" y2="22"/></svg>
<div style="position:absolute;left:2095px;top:125px;width:151px;height:54px;background:#fff;border:1.5px solid #e8eaee;border-radius:14px;box-sizing:border-box;box-shadow:0 1px 3px rgba(0,0,0,0.07);"></div>
<svg style="position:absolute;left:2117.30px;top:138.60px;" width="26" height="26" viewBox="0 0 24 24" fill="none" stroke="#111" stroke-width="2" stroke-linecap="round" stroke-linejoin="round"><circle cx="18" cy="5" r="3"/><circle cx="6" cy="12" r="3"/><circle cx="18" cy="19" r="3"/><line x1="8.59" x2="15.42" y1="13.51" y2="17.49"/><line x1="15.41" x2="8.59" y1="6.51" y2="10.49"/></svg>
<div style="position:absolute;left:2168.60px;top:140.45px;font-size:21.8px;line-height:21.8px;font-weight:400;color:#111;letter-spacing:-0.660px;white-space:nowrap;will-change:transform;-webkit-text-stroke:0.39px #111;">Share</div>
<div style="position:absolute;left:2261px;top:123px;width:275px;height:57px;background:#f8f9fb;border:1.5px solid #e5e7eb;border-radius:20px;box-sizing:border-box;"></div>
<div style="position:absolute;left:2266px;top:129px;width:131px;height:48px;background:#000;border-radius:14px;"></div>
<svg style="position:absolute;left:2285.95px;top:137.75px;" width="27.5" height="27.5" viewBox="0 0 24 24" fill="none" stroke="#fff" stroke-width="2" stroke-linecap="round" stroke-linejoin="round"><path d="M16 21v-2a4 4 0 0 0-4-4H6a4 4 0 0 0-4 4v2"/><circle cx="9" cy="7" r="4"/><path d="M22 21v-2a4 4 0 0 0-3-3.87"/><path d="M16 3.13a4 4 0 0 1 0 7.75"/></svg>
<div style="position:absolute;left:2335.00px;top:143.95px;font-size:16.72px;line-height:16.72px;font-weight:400;color:#fff;letter-spacing:0.423px;white-space:nowrap;will-change:transform;-webkit-text-stroke:0.50px #fff;">Team</div>
<svg style="position:absolute;left:2415.00px;top:138.20px;" width="27" height="27" viewBox="0 0 24 24" fill="none" stroke="#6b7280" stroke-width="2" stroke-linecap="round" stroke-linejoin="round"><rect width="18" height="11" x="3" y="11" rx="2" ry="2"/><path d="M7 11V7a5 5 0 0 1 10 0v4"/></svg>
<div style="position:absolute;left:2462.20px;top:144.95px;font-size:16.72px;line-height:16.72px;font-weight:400;color:#6b7280;letter-spacing:0.567px;white-space:nowrap;will-change:transform;-webkit-text-stroke:0.30px #6b7280;">Private</div>
<div style="position:absolute;left:2120px;top:302px;width:415px;height:135px;background:#fff;border-radius:26px;overflow:hidden;box-shadow:inset 0 0 0 1.5px #eceef1,0 1px 4px rgba(0,0,0,0.04)"><div style="position:absolute;left:0;top:0;width:415px;height:6px;background:#3b82f6"></div></div>
<svg style="position:absolute;left:2147.50px;top:334.00px;" width="25" height="25" viewBox="0 0 24 24" fill="none" stroke="#6b7280" stroke-width="1.8" stroke-linecap="round" stroke-linejoin="round"><path d="M9.937 15.5A2 2 0 0 0 8.5 14.063l-6.135-1.582a.5.5 0 0 1 0-.962L8.5 9.936A2 2 0 0 0 9.937 8.5l1.582-6.135a.5.5 0 0 1 .963 0L14.063 8.5A2 2 0 0 0 15.5 9.937l6.135 1.581a.5.5 0 0 1 0 .964L15.5 14.063a2 2 0 0 0-1.437 1.437l-1.582 6.135a.5.5 0 0 1-.963 0z"/><path d="M20 3v4"/><path d="M22 5h-4"/><circle cx="4" cy="20" r="2"/></svg>
<div style="position:absolute;left:2187.30px;top:337.65px;font-size:16.72px;line-height:16.72px;font-weight:400;color:#6b7280;letter-spacing:-0.517px;white-space:nowrap;will-change:transform;-webkit-text-stroke:0.30px #6b7280;">YOU</div>
<div style="position:absolute;left:2149.30px;top:383.99px;font-size:25.29px;line-height:25.29px;font-weight:400;color:#111;letter-spacing:0.105px;white-space:nowrap;will-change:transform;">What is the capital of Australia?</div>
<div style="position:absolute;left:939px;top:468px;width:784px;height:299px;background:#fff;border-radius:24px;overflow:hidden;box-shadow:inset 0 0 0 1.5px #eceef1,0 1px 4px rgba(0,0,0,0.04)"><div style="position:absolute;left:0;top:0;width:784px;height:6px;background:#10b981"></div></div>
<div style="position:absolute;left:980.30px;top:521.35px;font-size:25.58px;line-height:25.58px;font-weight:400;color:#111;letter-spacing:0.050px;white-space:nowrap;will-change:transform;-webkit-text-stroke:1.15px #111;">Response</div>
<div style="position:absolute;left:1580px;top:516px;width:101px;height:31px;background:#18181b;border-radius:10px;"></div>
<div style="position:absolute;left:1599.00px;top:522.40px;font-size:16.42px;line-height:16.42px;font-weight:400;color:#fff;letter-spacing:-0.189px;white-space:nowrap;will-change:transform;-webkit-text-stroke:0.74px #fff;">Selected</div>
<div style="position:absolute;left:982.30px;top:579.15px;font-size:25.58px;line-height:25.58px;font-weight:400;color:#111;letter-spacing:-0.024px;white-space:nowrap;will-change:transform;">The capital of Australia is Canberra. It was chosen as a</div>
<div style="position:absolute;left:981.30px;top:617.55px;font-size:25.58px;line-height:25.58px;font-weight:400;color:#111;letter-spacing:0.147px;white-space:nowrap;will-change:transform;">compromise between Sydney and Melbourne.</div>
<div style="position:absolute;left:981px;top:670px;width:700px;height:56px;background:#8b8c90;border-radius:12px;"></div>
<svg style="position:absolute;left:1260.80px;top:683.70px;" width="28" height="28" viewBox="0 0 24 24" fill="none" stroke="#fff" stroke-width="2" stroke-linecap="round" stroke-linejoin="round"><circle cx="12" cy="12" r="10"/><path d="m9 12 2 2 4-4"/></svg>
<div style="position:absolute;left:1313.80px;top:686.65px;font-size:21.8px;line-height:21.8px;font-weight:400;color:#fff;letter-spacing:0.300px;white-space:nowrap;will-change:transform;-webkit-text-stroke:0.39px #fff;">Selected</div>
<div style="position:absolute;left:1753px;top:468px;width:782px;height:299px;background:#fff;border-radius:24px;overflow:hidden;box-shadow:inset 0 0 0 1.5px #eceef1,0 1px 4px rgba(0,0,0,0.04)"><div style="position:absolute;left:0;top:0;width:782px;height:6px;background:#f59e0b"></div></div>
<div style="position:absolute;left:1793.00px;top:521.35px;font-size:25.58px;line-height:25.58px;font-weight:400;color:#111;letter-spacing:0.036px;white-space:nowrap;will-change:transform;-webkit-text-stroke:1.15px #111;">Response</div>
<div style="position:absolute;left:1793.00px;top:578.65px;font-size:25.58px;line-height:25.58px;font-weight:400;color:#111;letter-spacing:0.089px;white-space:nowrap;will-change:transform;">Many people are unaware that the capital of Australia is</div>
<div style="position:absolute;left:1794.00px;top:618.35px;font-size:25.58px;line-height:25.58px;font-weight:400;color:#111;letter-spacing:0.019px;white-space:nowrap;will-change:transform;">Canberra, not Sydney or Melbourne as many assume.</div>
<div style="position:absolute;left:1794px;top:671px;width:700px;height:54px;background:#fdfdfe;border:1.5px solid #e5e7eb;border-radius:12px;box-sizing:border-box;box-shadow:0 1px 3px rgba(0,0,0,0.06)"></div>
<svg style="position:absolute;left:2023.90px;top:684.00px;" width="27" height="27" viewBox="0 0 24 24" fill="none" stroke="#111" stroke-width="2.1" stroke-linecap="round" stroke-linejoin="round"><circle cx="12" cy="12" r="10"/></svg>
<div style="position:absolute;left:2075.20px;top:685.65px;font-size:21.8px;line-height:21.8px;font-weight:400;color:#111;letter-spacing:-0.080px;white-space:nowrap;will-change:transform;-webkit-text-stroke:0.65px #111;">Use This Response</div>
<div style="position:absolute;left:939px;top:1157px;width:1596px;height:316px;background:#fff;border-radius:26px;overflow:hidden;box-shadow:inset 0 0 0 1.5px #eceef1,0 1px 4px rgba(0,0,0,0.04)"><div style="position:absolute;left:0;top:0;width:1596px;height:7px;background:linear-gradient(90deg,#3b82f6,#06b6d4 50%,#6366f1)"></div></div>
<div style="position:absolute;left:960px;top:1184px;width:1554px;height:141px;background:#f4f5f8;border-radius:26px;"></div>
<div style="position:absolute;left:988px;top:1204px;width:27px;height:28px;background:#1c1d21;border-radius:7px;"></div>
<svg style="position:absolute;left:990.50px;top:1207.00px;" width="22" height="22" viewBox="0 0 24 24" fill="none" stroke="#fff" stroke-width="3" stroke-linecap="round" stroke-linejoin="round"><path d="M20 6 9 17l-5-5"/></svg>
<svg style="position:absolute;left:1026.15px;top:1209.15px;" width="20.5" height="20.5" viewBox="0 0 24 24" fill="none" stroke="#6b7280" stroke-width="2" stroke-linecap="round" stroke-linejoin="round"><circle cx="12" cy="12" r="10"/><path d="M12 2a14.5 14.5 0 0 0 0 20 14.5 14.5 0 0 0 0-20"/><path d="M2 12h20"/></svg>
<div style="position:absolute;left:1054.70px;top:1208.16px;font-size:21.08px;line-height:21.08px;font-weight:400;color:#6b7280;letter-spacing:0.291px;white-space:nowrap;will-change:transform;-webkit-text-stroke:0.38px #6b7280;">Web Search</div>
<div style="position:absolute;left:990px;top:1250px;width:193px;height:54px;background:#fff;border:1.5px solid #e8eaee;border-radius:12px;box-sizing:border-box;box-shadow:0 1px 3px rgba(0,0,0,0.07);"></div>
<div style="position:absolute;left:1134px;top:1251px;width:1.5px;height:52px;background:#e5e7eb;"></div>
<svg style="position:absolute;left:1011.00px;top:1264.40px;" width="28" height="28" viewBox="0 0 24 24" fill="none" stroke="#111" stroke-width="2" stroke-linecap="round" stroke-linejoin="round"><path d="m21.44 11.05-9.19 9.19a6 6 0 0 1-8.49-8.49l8.57-8.57A4 4 0 1 1 18 8.84l-8.59 8.57a2 2 0 0 1-2.83-2.83l8.49-8.48"/></svg>
<div style="position:absolute;left:1049.20px;top:1267.79px;font-size:21.51px;line-height:21.51px;font-weight:400;color:#111;letter-spacing:0.521px;white-space:nowrap;will-change:transform;-webkit-text-stroke:0.39px #111;">Attach</div>
<svg style="position:absolute;left:1145.70px;top:1264.60px;" width="28" height="28" viewBox="0 0 24 24" fill="none" stroke="#111" stroke-width="2" stroke-linecap="round" stroke-linejoin="round"><path d="m6 9 6 6 6-6"/></svg>
<div style="position:absolute;left:1200px;top:1250px;width:254px;height:54px;background:#fff;border:1.5px solid #e8eaee;border-radius:12px;box-sizing:border-box;box-shadow:0 1px 3px rgba(0,0,0,0.07);"></div>
<div style="position:absolute;left:1397px;top:1251px;width:1.5px;height:52px;background:#e5e7eb;"></div>
<svg style="position:absolute;left:1221.15px;top:1264.45px;" width="27.5" height="27.5" viewBox="0 0 24 24" fill="none" stroke="#111" stroke-width="2" stroke-linecap="round" stroke-linejoin="round"><path d="M5 12h14"/><path d="M12 5v14"/></svg>
<div style="position:absolute;left:1259.50px;top:1267.61px;font-size:21.37px;line-height:21.37px;font-weight:400;color:#111;letter-spacing:0.317px;white-space:nowrap;will-change:transform;-webkit-text-stroke:0.38px #111;">Add Prompt</div>
<svg style="position:absolute;left:1411.20px;top:1264.50px;" width="28" height="28" viewBox="0 0 24 24" fill="none" stroke="#111" stroke-width="2" stroke-linecap="round" stroke-linejoin="round"><path d="m6 9 6 6 6-6"/></svg>
<div style="position:absolute;left:2431px;top:1249px;width:56px;height:56px;background:#87888c;border-radius:14px;box-shadow:0 1px 3px rgba(0,0,0,0.1)"></div>
<svg style="position:absolute;left:2444.95px;top:1264.15px;" width="27.7" height="27.7" viewBox="0 0 24 24" fill="none" stroke="#fff" stroke-width="2" stroke-linecap="round" stroke-linejoin="round"><path d="m5 12 7-7 7 7"/><path d="M12 19V5"/></svg>
<div style="position:absolute;left:966.70px;top:1365.30px;font-size:25.87px;line-height:25.87px;font-weight:400;color:#6b7280;letter-spacing:-0.170px;white-space:nowrap;will-change:transform;">How can I help you today?</div></div></body></html>
